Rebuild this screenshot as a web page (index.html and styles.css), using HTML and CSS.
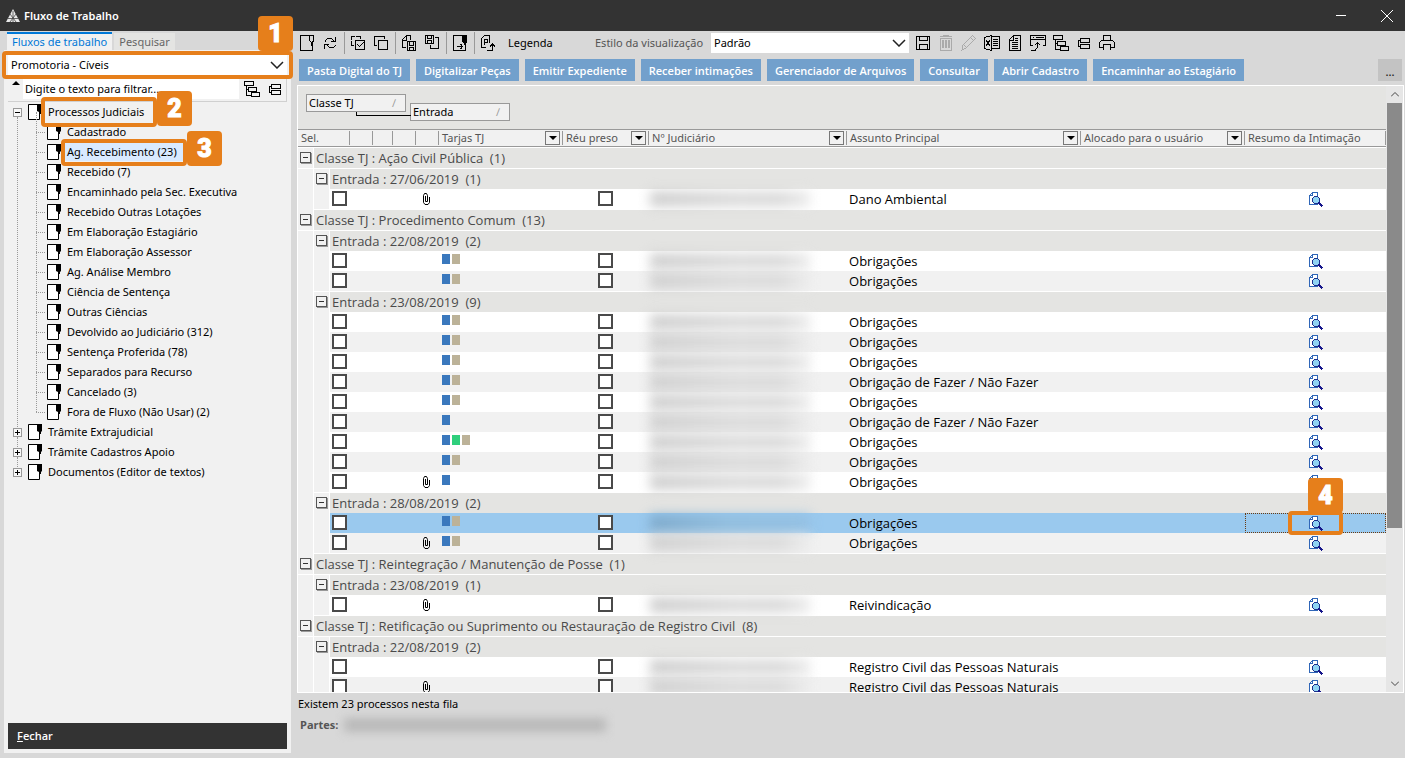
FILE: index.html
```html
<!DOCTYPE html>
<html lang="pt-BR">
<head>
<meta charset="utf-8">
<title>Fluxo de Trabalho</title>
<link rel="stylesheet" href="styles.css">
</head>
<body>
<svg class="defs" aria-hidden="true">
  <symbol id="doc" viewBox="0 0 14 16"><path d="M.5.5h11v15H.5z" fill="#fff" stroke="#000"/><path d="M9 0h5v7l-1 1v2h-2V8L9 7z" fill="#000"/></symbol>
  <symbol id="new" viewBox="0 0 16 16"><path d="M10 .5H1.500v15h12V11M10.500.5h4v5l-1 2v3h-1v-3l-2-2z"/></symbol>
  <symbol id="refresh" viewBox="0 0 16 16"><path d="M3.500 6.500v-1l2-2h4l3 3M13.500 2v4.500H9M13.500 9.500v1l-2 2h-4l-3-3M2.500 14V9.500H7"/></symbol>
  <symbol id="selall" viewBox="0 0 16 16"><path d="M5.500 5.500h9v9h-9zM7.500 9.500l2 2 4-4"/><path d="M4 10.500H1.500v-9h9V4" stroke-dasharray="7 1"/></symbol>
  <symbol id="selnone" viewBox="0 0 16 16"><path d="M5.500 5.500h9v9h-9zM4 10.500H1.500v-9h10V4"/></symbol>
  <symbol id="docsave" viewBox="0 0 16 16"><path d="M5 12.500H1.500v-8l4-4h4V5M5.500 1v4H2M6.500 6.500h8v9h-8zM8.500 7v3h4V7M8.500 15v-2.500h4V15"/></symbol>
  <symbol id="savedoc" viewBox="0 0 16 16"><path d="M1.500.5h8v8h-8zM3.500 1v2.500h4V1M3.500 8V5.500h4V8M11 2.500h3.500v11h-8V10"/></symbol>
  <symbol id="docgo" viewBox="0 0 16 16"><path d="M10 .5H1.500v15h12V10"/><path d="M5 11.500h5M8.500 9l2 2.500-2 2.500"/><path d="M10 0h5v7l-1 1v2h-2V8l-2-1z" fill="#000" stroke="none"/></symbol>
  <symbol id="docp" viewBox="0 0 16 16"><path d="M6 12.500H1.500v-9l3-3h5V8M4.500 10V4.500h3v3h-3M7.500 14.500v1h5V9M10 11.500l2.500-2.500 2.500 2.500"/></symbol>
  <symbol id="save" viewBox="0 0 16 16"><path d="M1.500 1.500h13v13h-13zM4.500 2v3.500h8V2M4.500 14V9.500h8V14"/></symbol>
  <symbol id="trash" viewBox="0 0 16 16"><path d="M2.500 3.500h11v12h-11zM2 1.500h12M5.500 2V.5h5V2"/><path d="M5 5v8M8 5v8M11 5v8" stroke-width="2"/></symbol>
  <symbol id="pencil" viewBox="0 0 16 16"><path d="M1 15l1-5L11.500.5l3 3L5 13zM2.500 9.500l3 3M9.500 2.500l3 3"/></symbol>
  <symbol id="excel" viewBox="0 0 16 16"><path d="M.5 2.500l7-2v15l-7-2zM8 1.500h7.500v12H8M9 4.500h5M9 6.500h5M9 8.500h5M9 10.500h5"/><path d="M2 5.500l4 5M6 5.500l-4 5" stroke-width="1.500"/></symbol>
  <symbol id="sheet" viewBox="0 0 16 16"><path d="M2.500 4.500l4-4h7v15h-11zM6.500 1v4H3M5 7.500h6M5 9.500h6M5 11.500h6M5 13.500h6M8 3.500h3M8 5.500h3"/></symbol>
  <symbol id="winup" viewBox="0 0 16 16"><path d="M3 10.500H.5V.5h15v10H13M1 4.500h14M6 2.500h8M3 2.500h1M7.500 8v4l-2 3H1M5 10l2.500-2.500L10 10"/></symbol>
  <symbol id="tree" viewBox="0 0 16 16"><path d="M.5.500h9v4h-9zM4.500 6.500h8v4h-8zM7.500 11.500h8v4h-8zM2.500 5v9.500H7M2.500 8.500H4"/></symbol>
  <symbol id="flat" viewBox="0 0 16 16"><path d="M4.500 3.500h9v4h-9zM4.500 9.500h9v4h-9zM4 5.500H2.500v6H4"/></symbol>
  <symbol id="print" viewBox="0 0 16 16"><path d="M4.500 5V.5h7V5M4 12.500H.5v-5l2-2h11l2 2v5H12M4.500 15v-5.500h7V15"/></symbol>
  <symbol id="clip" viewBox="0 0 8 12"><path d="M2.500 3v5.500h2V2.500l-1-2h-2l-1 2v7l1.500 2h3l1.500-2V4"/></symbol>
  <symbol id="view" viewBox="0 0 15 15"><path d="M.5 3.500l3-3h5v12h-8z" fill="#fff" stroke="#2f66b8"/><path d="M3.500.5v3h-3" fill="none" stroke="#2f66b8"/><circle cx="7" cy="8" r="3.500" fill="#8fd3f2" stroke="#1b2f8c"/><path d="M9.500 10.500l4 4" stroke="#15158a" stroke-width="2"/></symbol>
  <symbol id="chev" viewBox="0 0 14 8"><path d="M1 1l6 6 6-6" fill="none" stroke="#222" stroke-width="1.500"/></symbol>
</svg>

<header class="titlebar">
  <svg class="logo" viewBox="0 0 14 14"><path d="M7 0l7 13H0z" fill="#e8e8e8"/><path d="M4 5l6 8M10 5l-6 8M2 9.500h10M7 2v11" stroke="#444" stroke-width=".8"/></svg>
  <h1>Fluxo de Trabalho</h1>
  <button class="winbtn" aria-label="Minimizar"><svg viewBox="0 0 12 12"><path d="M1 5.500h10"/></svg></button>
  <button class="winbtn" aria-label="Fechar janela"><svg viewBox="0 0 12 12"><path d="M0 0l12 12M12 0L0 12"/></svg></button>
</header>

<div class="app">
<aside class="side">
  <nav class="tabs"><button class="tab active">Fluxos de trabalho</button><button class="tab">Pesquisar</button></nav>
  <div class="sidebody">
    <div class="combo unit">
      <select aria-label="Lotação"><option>Promotoria - Cíveis</option></select>
      <svg class="chev"><use href="#chev"/></svg>
      <span class="mark mark1"></span><b class="num num1">1</b>
    </div>
    <div class="filter">
      <span class="uparrow"></span>
      <input type="text" aria-label="Filtro" value="Digite o texto para filtrar...">
      <button aria-label="Expandir"><svg class="ic"><use href="#tree"/></svg></button>
      <button aria-label="Recolher"><svg class="ic"><use href="#flat"/></svg></button>
    </div>
    <ul class="treeview">
      <li><div class="node"><button class="pm" aria-label="Recolher"></button><svg class="doc"><use href="#doc"/></svg><span class="lbl">Processos Judiciais<span class="mark mark2"></span><b class="num num2">2</b></span></div>
        <ul>
          <li class="node"><svg class="doc"><use href="#doc"/></svg><span class="lbl">Cadastrado</span></li>
          <li class="node"><svg class="doc"><use href="#doc"/></svg><span class="lbl sel">Ag. Recebimento (23)<span class="mark mark3"></span><b class="num num3">3</b></span></li>
          <li class="node"><svg class="doc"><use href="#doc"/></svg><span class="lbl">Recebido (7)</span></li>
          <li class="node"><svg class="doc"><use href="#doc"/></svg><span class="lbl">Encaminhado pela Sec. Executiva</span></li>
          <li class="node"><svg class="doc"><use href="#doc"/></svg><span class="lbl">Recebido Outras Lotações</span></li>
          <li class="node"><svg class="doc"><use href="#doc"/></svg><span class="lbl">Em Elaboração Estagiário</span></li>
          <li class="node"><svg class="doc"><use href="#doc"/></svg><span class="lbl">Em Elaboração Assessor</span></li>
          <li class="node"><svg class="doc"><use href="#doc"/></svg><span class="lbl">Ag. Análise Membro</span></li>
          <li class="node"><svg class="doc"><use href="#doc"/></svg><span class="lbl">Ciência de Sentença</span></li>
          <li class="node"><svg class="doc"><use href="#doc"/></svg><span class="lbl">Outras Ciências</span></li>
          <li class="node"><svg class="doc"><use href="#doc"/></svg><span class="lbl">Devolvido ao Judiciário (312)</span></li>
          <li class="node"><svg class="doc"><use href="#doc"/></svg><span class="lbl">Sentença Proferida (78)</span></li>
          <li class="node"><svg class="doc"><use href="#doc"/></svg><span class="lbl">Separados para Recurso</span></li>
          <li class="node"><svg class="doc"><use href="#doc"/></svg><span class="lbl">Cancelado (3)</span></li>
          <li class="node"><svg class="doc"><use href="#doc"/></svg><span class="lbl">Fora de Fluxo (Não Usar) (2)</span></li>
        </ul>
      </li>
      <li><div class="node"><button class="pm plus" aria-label="Expandir"></button><svg class="doc"><use href="#doc"/></svg><span class="lbl">Trâmite Extrajudicial</span></div></li>
      <li><div class="node"><button class="pm plus" aria-label="Expandir"></button><svg class="doc"><use href="#doc"/></svg><span class="lbl">Trâmite Cadastros Apoio</span></div></li>
      <li><div class="node"><button class="pm plus" aria-label="Expandir"></button><svg class="doc"><use href="#doc"/></svg><span class="lbl">Documentos (Editor de textos)</span></div></li>
    </ul>
    <button class="close"><u>F</u>echar</button>
  </div>
</aside>

<main class="main">
  <div class="toolbar">
    <button aria-label="Novo"><svg class="ic"><use href="#new"/></svg></button>
    <button aria-label="Atualizar"><svg class="ic"><use href="#refresh"/></svg></button><i></i>
    <button aria-label="Selecionar todos"><svg class="ic"><use href="#selall"/></svg></button>
    <button aria-label="Limpar seleção"><svg class="ic"><use href="#selnone"/></svg></button><i></i>
    <button aria-label="Salvar documento"><svg class="ic"><use href="#docsave"/></svg></button>
    <button aria-label="Salvar cópia"><svg class="ic"><use href="#savedoc"/></svg></button><i></i>
    <button aria-label="Encaminhar"><svg class="ic"><use href="#docgo"/></svg></button><i></i>
    <button aria-label="Peticionar"><svg class="ic"><use href="#docp"/></svg></button>
    <button class="legend">Legenda</button>
    <label for="estilo">Estilo da visualização</label>
    <div class="combo style"><select id="estilo"><option>Padrão</option></select><svg class="chev"><use href="#chev"/></svg></div>
    <button aria-label="Salvar"><svg class="ic"><use href="#save"/></svg></button>
    <button aria-label="Excluir" disabled><svg class="ic"><use href="#trash"/></svg></button>
    <button aria-label="Editar" disabled><svg class="ic"><use href="#pencil"/></svg></button>
    <button aria-label="Excel"><svg class="ic"><use href="#excel"/></svg></button>
    <button aria-label="Relatório"><svg class="ic"><use href="#sheet"/></svg></button>
    <button aria-label="Colunas"><svg class="ic"><use href="#winup"/></svg></button>
    <button aria-label="Expandir grupos"><svg class="ic"><use href="#tree"/></svg></button>
    <button aria-label="Recolher grupos"><svg class="ic"><use href="#flat"/></svg></button>
    <button aria-label="Imprimir"><svg class="ic"><use href="#print"/></svg></button>
  </div>
  <div class="actions">
    <button>Pasta Digital do TJ</button><button>Digitalizar Peças</button><button>Emitir Expediente</button><button>Receber intimações</button><button>Gerenciador de Arquivos</button><button>Consultar</button><button>Abrir Cadastro</button><button>Encaminhar ao Estagiário</button><button class="more" aria-label="Mais">...</button>
  </div>
  <section class="panel">
    <div class="view">
      <div class="groupby"><button>Classe TJ<span>∕</span></button><button class="second">Entrada<span>∕</span></button></div>
      <table>
        <colgroup><col class="c-ind"><col class="c-ind"><col class="c-sel"><col class="c-b"><col class="c-a"><col class="c-b"><col class="c-b"><col class="c-tar"><col class="c-reu"><col class="c-num"><col><col class="c-alo"><col class="c-res"></colgroup>
        <thead><tr><th colspan="3">Sel.</th><th></th><th></th><th></th><th></th>
          <th><div>Tarjas TJ<button aria-label="Filtrar Tarjas"></button></div></th>
          <th><div>Réu preso<button aria-label="Filtrar Réu preso"></button></div></th>
          <th><div>Nº Judiciário<button aria-label="Filtrar Nº"></button></div></th>
          <th><div>Assunto Principal<button aria-label="Filtrar Assunto"></button></div></th>
          <th><div>Alocado para o usuário<button aria-label="Filtrar Alocado"></button></div></th>
          <th>Resumo da Intimação</th></tr></thead>
        <tbody>
        <tr class="g1"><td><button class="ex" aria-label="Recolher"></button></td><td colspan="12">Classe TJ : Ação Civil Pública &nbsp;(1)</td></tr>
        <tr class="g2"><td></td><td><button class="ex" aria-label="Recolher"></button></td><td colspan="11">Entrada : 27/06/2019 &nbsp;(1)</td></tr>
        <tr class="last"><td></td><td></td><td><input type="checkbox" aria-label="Selecionar"></td><td></td><td></td><td></td><td><svg class="clip"><use href="#clip"/></svg></td><td></td><td><input type="checkbox" aria-label="Réu preso"></td><td><span class="hid"></span></td><td>Dano Ambiental</td><td></td><td><svg class="vw"><use href="#view"/></svg></td></tr>
        <tr class="g1"><td><button class="ex" aria-label="Recolher"></button></td><td colspan="12">Classe TJ : Procedimento Comum &nbsp;(13)</td></tr>
        <tr class="g2"><td></td><td><button class="ex" aria-label="Recolher"></button></td><td colspan="11">Entrada : 22/08/2019 &nbsp;(2)</td></tr>
        <tr><td></td><td></td><td><input type="checkbox" aria-label="Selecionar"></td><td></td><td></td><td></td><td></td><td><s></s><s class="t"></s></td><td><input type="checkbox" aria-label="Réu preso"></td><td><span class="hid"></span></td><td>Obrigações</td><td></td><td><svg class="vw"><use href="#view"/></svg></td></tr>
        <tr class="alt last"><td></td><td></td><td><input type="checkbox" aria-label="Selecionar"></td><td></td><td></td><td></td><td></td><td><s></s><s class="t"></s></td><td><input type="checkbox" aria-label="Réu preso"></td><td><span class="hid"></span></td><td>Obrigações</td><td></td><td><svg class="vw"><use href="#view"/></svg></td></tr>
        <tr class="g2"><td></td><td><button class="ex" aria-label="Recolher"></button></td><td colspan="11">Entrada : 23/08/2019 &nbsp;(9)</td></tr>
        <tr><td></td><td></td><td><input type="checkbox" aria-label="Selecionar"></td><td></td><td></td><td></td><td></td><td><s></s><s class="t"></s></td><td><input type="checkbox" aria-label="Réu preso"></td><td><span class="hid"></span></td><td>Obrigações</td><td></td><td><svg class="vw"><use href="#view"/></svg></td></tr>
        <tr class="alt"><td></td><td></td><td><input type="checkbox" aria-label="Selecionar"></td><td></td><td></td><td></td><td></td><td><s></s><s class="t"></s></td><td><input type="checkbox" aria-label="Réu preso"></td><td><span class="hid"></span></td><td>Obrigações</td><td></td><td><svg class="vw"><use href="#view"/></svg></td></tr>
        <tr><td></td><td></td><td><input type="checkbox" aria-label="Selecionar"></td><td></td><td></td><td></td><td></td><td><s></s><s class="t"></s></td><td><input type="checkbox" aria-label="Réu preso"></td><td><span class="hid"></span></td><td>Obrigações</td><td></td><td><svg class="vw"><use href="#view"/></svg></td></tr>
        <tr class="alt"><td></td><td></td><td><input type="checkbox" aria-label="Selecionar"></td><td></td><td></td><td></td><td></td><td><s></s><s class="t"></s></td><td><input type="checkbox" aria-label="Réu preso"></td><td><span class="hid"></span></td><td>Obrigação de Fazer / Não Fazer</td><td></td><td><svg class="vw"><use href="#view"/></svg></td></tr>
        <tr><td></td><td></td><td><input type="checkbox" aria-label="Selecionar"></td><td></td><td></td><td></td><td></td><td><s></s><s class="t"></s></td><td><input type="checkbox" aria-label="Réu preso"></td><td><span class="hid"></span></td><td>Obrigações</td><td></td><td><svg class="vw"><use href="#view"/></svg></td></tr>
        <tr class="alt"><td></td><td></td><td><input type="checkbox" aria-label="Selecionar"></td><td></td><td></td><td></td><td></td><td><s></s></td><td><input type="checkbox" aria-label="Réu preso"></td><td><span class="hid"></span></td><td>Obrigação de Fazer / Não Fazer</td><td></td><td><svg class="vw"><use href="#view"/></svg></td></tr>
        <tr><td></td><td></td><td><input type="checkbox" aria-label="Selecionar"></td><td></td><td></td><td></td><td></td><td><s></s><s class="g"></s><s class="t"></s></td><td><input type="checkbox" aria-label="Réu preso"></td><td><span class="hid"></span></td><td>Obrigações</td><td></td><td><svg class="vw"><use href="#view"/></svg></td></tr>
        <tr class="alt"><td></td><td></td><td><input type="checkbox" aria-label="Selecionar"></td><td></td><td></td><td></td><td></td><td><s></s><s class="t"></s></td><td><input type="checkbox" aria-label="Réu preso"></td><td><span class="hid"></span></td><td>Obrigações</td><td></td><td><svg class="vw"><use href="#view"/></svg></td></tr>
        <tr class="last"><td></td><td></td><td><input type="checkbox" aria-label="Selecionar"></td><td></td><td></td><td></td><td><svg class="clip"><use href="#clip"/></svg></td><td><s></s></td><td><input type="checkbox" aria-label="Réu preso"></td><td><span class="hid"></span></td><td>Obrigações</td><td></td><td><svg class="vw"><use href="#view"/></svg></td></tr>
        <tr class="g2"><td></td><td><button class="ex" aria-label="Recolher"></button></td><td colspan="11">Entrada : 28/08/2019 &nbsp;(2)</td></tr>
        <tr class="cur"><td></td><td></td><td><input type="checkbox" aria-label="Selecionar"></td><td></td><td></td><td></td><td></td><td><s></s><s class="t"></s></td><td><input type="checkbox" aria-label="Réu preso"></td><td><span class="hid"></span></td><td>Obrigações</td><td></td><td class="focus"><svg class="vw"><use href="#view"/></svg><span class="mark mark4"></span><b class="num num4">4</b></td></tr>
        <tr class="alt last"><td></td><td></td><td><input type="checkbox" aria-label="Selecionar"></td><td></td><td></td><td></td><td><svg class="clip"><use href="#clip"/></svg></td><td><s></s><s class="t"></s></td><td><input type="checkbox" aria-label="Réu preso"></td><td><span class="hid"></span></td><td>Obrigações</td><td></td><td><svg class="vw"><use href="#view"/></svg></td></tr>
        <tr class="g1"><td><button class="ex" aria-label="Recolher"></button></td><td colspan="12">Classe TJ : Reintegração / Manutenção de Posse &nbsp;(1)</td></tr>
        <tr class="g2"><td></td><td><button class="ex" aria-label="Recolher"></button></td><td colspan="11">Entrada : 23/08/2019 &nbsp;(1)</td></tr>
        <tr class="last"><td></td><td></td><td><input type="checkbox" aria-label="Selecionar"></td><td></td><td></td><td></td><td><svg class="clip"><use href="#clip"/></svg></td><td></td><td><input type="checkbox" aria-label="Réu preso"></td><td><span class="hid"></span></td><td>Reivindicação</td><td></td><td><svg class="vw"><use href="#view"/></svg></td></tr>
        <tr class="g1"><td><button class="ex" aria-label="Recolher"></button></td><td colspan="12">Classe TJ : Retificação ou Suprimento ou Restauração de Registro Civil &nbsp;(8)</td></tr>
        <tr class="g2"><td></td><td><button class="ex" aria-label="Recolher"></button></td><td colspan="11">Entrada : 22/08/2019 &nbsp;(2)</td></tr>
        <tr><td></td><td></td><td><input type="checkbox" aria-label="Selecionar"></td><td></td><td></td><td></td><td></td><td></td><td><input type="checkbox" aria-label="Réu preso"></td><td><span class="hid"></span></td><td>Registro Civil das Pessoas Naturais</td><td></td><td><svg class="vw"><use href="#view"/></svg></td></tr>
        <tr class="alt"><td></td><td></td><td><input type="checkbox" aria-label="Selecionar"></td><td></td><td></td><td></td><td><svg class="clip"><use href="#clip"/></svg></td><td></td><td><input type="checkbox" aria-label="Réu preso"></td><td><span class="hid"></span></td><td>Registro Civil das Pessoas Naturais</td><td></td><td><svg class="vw"><use href="#view"/></svg></td></tr>
        </tbody>
      </table>
    </div>
    <div class="scroll">
      <svg viewBox="0 0 8 5"><path d="M0 4.500l4-4 4 4"/></svg>
      <span class="thumb"></span>
      <svg viewBox="0 0 8 5"><path d="M0 .5l4 4 4-4"/></svg>
    </div>
  </section>
  <footer class="status">
    <p>Existem 23 processos nesta fila</p>
    <p class="parts"><strong>Partes:</strong><span class="hidname"></span></p>
  </footer>
</main>
</div>
</body>
</html>
```

FILE: styles.css
```css
* { box-sizing: border-box; }
body { margin: 0; height: 100vh; overflow: hidden; display: flex; flex-direction: column; background: #d8d8d8; color: #000; font: 11px/16px "Noto Sans", "Open Sans", sans-serif; }
button, input, select { font: inherit; color: inherit; margin: 0; padding: 0; border: 0; background: none; border-radius: 0; }
ul { list-style: none; margin: 0; padding: 0; }
p, h1 { margin: 0; }
svg { display: block; }
.defs { position: absolute; width: 0; height: 0; }

.titlebar { height: 31px; flex: none; display: flex; align-items: center; background: #333; color: #fff; padding-left: 6px; }
.logo { width: 14px; height: 14px; margin-right: 4px; }
.titlebar h1 { flex: 1; font-size: 11px; font-weight: 600; }
.winbtn { width: 46px; height: 31px; display: grid; place-items: center; padding-left: 10px; }
.winbtn svg { width: 12px; height: 12px; stroke: #fff; fill: none; }

.app { flex: 1; min-height: 0; display: flex; }
.side { flex: none; width: 292px; padding: 1px 1px 5px 4px; display: flex; flex-direction: column; }
.tabs { display: flex; align-items: flex-end; gap: 2px; padding-left: 3px; }
.tab { height: 17px; padding: 0 5px; background: #e4e4e2; color: #666; }
.tab.active { height: 18px; border-top: 2px solid #0078d7; background: #f1f1f1; color: #0078d7; }
.sidebody { flex: 1; min-height: 0; display: flex; flex-direction: column; background: #f1f1f1; padding: 5px 4px 4px; }
.combo { position: relative; display: flex; background: #fff; }
.combo select { flex: 1; width: 100%; padding: 0 3px; appearance: none; outline: 0; }
.combo .chev { position: absolute; right: 3px; top: 6px; width: 14px; height: 8px; pointer-events: none; }
.unit { height: 20px; }
.filter { display: flex; align-items: center; height: 27px; padding-top: 2px; border: 1px solid #d0d0d0; border-width: 0 1px 1px 0; }
.filter input { flex: 1; min-width: 0; height: 20px; background: #fff; padding: 0 2px 2px; }
.filter button { width: 23px; display: grid; place-items: center start; padding-left: 2px; }
.filter button:nth-of-type(1) { margin-left: 3px; }
.filter button:nth-of-type(2) { width: 21px; }
.uparrow { width: 15px; height: 18px; padding-top: 1px; }
.uparrow::before { content: ""; display: block; margin-left: 4px; border: 4px solid transparent; border-top: 0; border-bottom-color: #000; width: 0; }
.ic { width: 16px; height: 16px; fill: none; stroke: #000; shape-rendering: crispEdges; }
button:disabled .ic { stroke: #aaa; }

.treeview { flex: 1; padding-left: 5px; }
.node { display: flex; align-items: center; height: 20px; position: relative; }
.treeview > li { position: relative; }
.treeview > li:not(:last-child)::before { content: ""; position: absolute; left: 4px; top: 15px; bottom: -5px; border-left: 1px dotted #999; }
.pm { position: relative; width: 9px; height: 9px; flex: none; border: 1px solid #999; background: #f8f8f8; margin-right: 6px; }
.pm::before { content: ""; position: absolute; left: 1px; right: 1px; top: 3px; height: 1px; background: #000; }
.plus::after { content: ""; position: absolute; top: 1px; bottom: 1px; left: 3px; width: 1px; background: #000; }
.doc { width: 14px; height: 16px; flex: none; }
.lbl { position: relative; margin-left: 3px; padding: 0 3px; line-height: 18px; white-space: nowrap; }
.sel { background: #d9eaff; padding-right: 6px; }
.treeview ul { padding-left: 34px; }
.treeview ul .node::before { content: ""; position: absolute; left: -11px; top: 10px; width: 9px; border-top: 1px dotted #999; }
.treeview ul .node::after { content: ""; position: absolute; left: -11px; top: -10px; height: 20px; border-left: 1px dotted #999; }
.close { height: 26px; background: #333; color: #fff; text-align: left; padding-left: 9px; font-family: "Open Sans", sans-serif; font-weight: 600; }

.mark { position: absolute; border: 4px solid #e67f1b; border-radius: 4px; pointer-events: none; z-index: 2; }
.num { position: absolute; width: 35px; height: 35px; border-radius: 4px; background: #e67f1b; color: #fff; font: 900 25px/35px Roboto, sans-serif; -webkit-text-stroke: 1px #fff; text-align: center; z-index: 3; }
.mark1 { inset: -4px -6px -4px -6px; }
.num1 { right: -6px; bottom: 24px; }
.mark2 { inset: -6px -10px -6px -4px; }
.num2 { left: 112px; top: -12px; }
.mark3 { inset: -4px -4px -5px -3px; }
.num3 { left: 123px; top: -12px; }
.mark4 { left: 43px; right: 43px; top: -2px; bottom: -2px; }
.num4 { right: 43px; bottom: 20px; }

.main { flex: 1; min-width: 0; display: flex; flex-direction: column; padding: 0 0 0 4px; }
.toolbar { display: flex; align-items: center; height: 24px; flex: none; }
.toolbar > button { width: 23px; height: 22px; display: grid; place-items: center start; padding-left: 3px; flex: none; }
.toolbar > i { width: 5px; height: 22px; flex: none; border-left: 1px solid #999; margin-left: 2px; margin-right: -2px; }
.toolbar > .legend { width: 60px; padding-left: 8px; }
.toolbar label { margin-left: 35px; color: #555; width: 116px; white-space: nowrap; }
.style { width: 198px; height: 20px; margin-right: 3px; }
.actions { display: flex; gap: 6px; padding: 4px 3px 3px; flex: none; }
.actions button { height: 22px; padding: 1px 8px 0; background: #72a0cc; color: #fff; font-family: "Open Sans", sans-serif; font-weight: 600; white-space: nowrap; }
.actions .more { margin-left: auto; width: 24px; padding: 4px 0 0; background: #c3c3c3; color: #222; }
.panel { flex: 1; min-height: 0; display: flex; margin: 1px 1px 0 1px; border: 1px solid #fff; background: #e4e4e2; }
.view { flex: 1; min-width: 0; overflow: hidden; background: #e4e4e2; }
.groupby { display: flex; align-items: flex-start; gap: 4px; height: 43px; padding: 8px; }
.groupby button { position: relative; display: flex; justify-content: space-between; width: 100px; height: 18px; padding: 0 9px 0 2px; border: 1px solid #999; background: #f1f1f1; line-height: 16px; }
.groupby span { color: #999; }
.groupby .second { margin-top: 9px; }
.groupby .second::before { content: ""; position: absolute; right: 100%; top: 8px; width: 54px; height: 3px; border: solid #000; border-width: 0 0 1px 1px; }

table { width: 100%; border-collapse: separate; border-spacing: 0; table-layout: fixed; font-family: "Open Sans", sans-serif; font-size: 13px; }
th, td { padding: 0; height: 20px; line-height: 18px; text-align: left; white-space: nowrap; vertical-align: top; }
.c-ind { width: 16px; } .c-sel { width: 20px; } .c-a { width: 20px; } .c-b { width: 23px; }
.c-tar { width: 124px; } .c-reu { width: 86px; } .c-num { width: 198px; } .c-alo { width: 164px; } .c-res { width: 141px; }
th { height: 19px; background: #f1f1f1; color: #555; font-family: "Noto Sans", sans-serif; font-size: 11px; font-weight: 400; line-height: 16px; border-top: 1px solid #999; box-shadow: inset 0 -1px #fff, inset 0 -2px #999; padding-left: 3px; background-image: linear-gradient(#999, #999); background-size: 1px 14px; background-position: right 1px; background-repeat: no-repeat; }
th div { display: flex; align-items: center; justify-content: space-between; height: 16px; padding-right: 3px; }
th div button { width: 15px; height: 14px; border: 1px solid #777; display: grid; place-items: center; }
th div button::before { content: ""; border: 4px solid transparent; border-bottom: 0; border-top-color: #000; }
tbody tr { background: #fff; }
tbody tr.alt { background: #f1f1f1; }
tbody tr.g1, tbody tr.g2 { background: #e4e4e2; color: #4a4a4a; }
tbody tr.cur { background: #9ac9ee; }
tbody td:first-child, tbody tr:not(.g1) > td:nth-child(2) { background: #f1f1f1; box-shadow: inset -1px 0 #fff; }
.g1 td { height: 21px; border-bottom: 1px solid #fff; }
.g1 td:nth-child(2), .g2 td:nth-child(3) { padding-left: 2px; line-height: 20px; }
.last td { height: 21px; }
.last td:not(:first-child) { border-bottom: 1px solid #fff; }
.ex { display: block; position: relative; width: 11px; height: 11px; margin: 4px 0 0 2px; border: 1px solid #555; background: #f1f1f1; box-shadow: 1px 1px #999; }
.ex::before { content: ""; position: absolute; left: 2px; right: 2px; top: 4px; border-top: 1px solid #333; }
td input { display: block; appearance: none; width: 15px; height: 15px; border: 2px solid #4a4a4a; background: #fff; margin: 2px 0 0 2px; }
td:nth-child(9) input { margin-left: 35px; }
td:nth-child(11) { padding-left: 2px; line-height: 20px; }
.clip { width: 8px; height: 12px; margin: 4px 0 0 7px; fill: none; stroke: #000; }
s { float: left; width: 8px; height: 10px; margin: 3px 2px 0 0; background: #3a78bd; }
td s:first-child { margin-left: 3px; }
s.t { background: #bcb298; }
s.g { background: #2fcf7c; }
.hid { display: block; width: 160px; height: 16px; margin: 2px 0 0 1px; background: linear-gradient(90deg, #cfcfcf, #dcdcdc 55%, #dadada 80%, #ececec); filter: blur(6px); }
.cur .hid { background: linear-gradient(90deg, #7ea9ca, #92bede 50%, #94c0e2); }
.vw { width: 15px; height: 15px; margin: 3px 0 0 64px; shape-rendering: crispEdges; }
.focus { position: relative; outline: 1px dotted #6b3a10; outline-offset: -1px; }

.scroll { width: 17px; flex: none; display: flex; flex-direction: column; align-items: center; background: #e6e6e6; padding: 6px 1px; }
.scroll svg { width: 8px; height: 5px; fill: none; stroke: #444; flex: none; }
.thumb { width: 100%; height: 425px; margin: 6px 0 auto; background: #8a8a8a; }
.status { flex: none; height: 65px; padding: 3px 2px; }
.parts { display: flex; align-items: center; margin-top: 5px; padding-left: 2px; color: #555; font-family: "Open Sans", sans-serif; }
.hidname { width: 262px; height: 14px; margin-left: 6px; background: #b9b9b9; filter: blur(5px); }
```
